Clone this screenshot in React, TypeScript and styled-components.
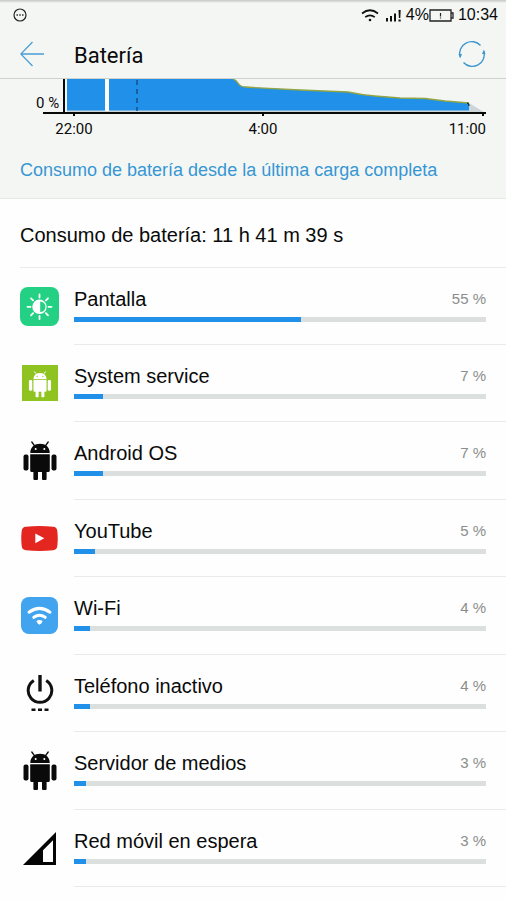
import React from "react";
import styled, { createGlobalStyle } from "styled-components";

const GlobalStyle = createGlobalStyle`
  *, *::before, *::after { box-sizing: border-box; }
  body {
    margin: 0;
    background: #fdfefd;
    color: #0a0a0a;
    font-family: "Liberation Sans", Arial, sans-serif;
  }
`;

const Page = styled.div`
  display: flex;
  flex-direction: column;
  min-height: 100vh;
  padding-bottom: 13px;
`;

const Top = styled.div`
  background: #f4f6f4;
  border-bottom: 1px solid #e6e8e6;
`;

const StatusBar = styled.div`
  display: flex;
  align-items: center;
  justify-content: space-between;
  height: 30px;
  padding: 0 8px 0 13px;
  background: linear-gradient(#c4c5c4, #f4f6f4 3px);
  font-size: 16px;
`;

const StatusGroup = styled.div`
  display: flex;
  align-items: center;
  gap: 4px;
`;

const Battery = styled.span`
  display: flex;
  align-items: center;
`;

const Header = styled.header`
  display: flex;
  align-items: center;
  height: 49px;
  padding: 0 20px;
  border-bottom: 1px solid #cfd1cf;
`;

const IconButton = styled.button`
  display: flex;
  padding: 0;
  border: 0;
  background: none;
  cursor: pointer;
`;

const Title = styled.h1`
  flex: 1;
  margin: 0 0 0 29px;
  padding-top: 3px;
  font: 400 22px/28px Roboto, sans-serif;
`;

const Chart = styled.section`
  display: grid;
  padding: 0 20px;
  font: 15px/20px Roboto, sans-serif;
`;

const Plot = styled.svg`
  grid-area: 1 / 1;
  display: block;
  width: 100%;
  height: 38px;
`;

const LevelLabel = styled.span`
  grid-area: 1 / 1;
  margin: 15px 0 0 16px;
  font-size: 15px;
  line-height: 18px;
`;

const Hours = styled.div`
  display: grid;
  grid-template-columns: 108fr 270fr 88fr;
  padding-top: 2px;
  text-align: center;

  span:last-child { text-align: right; }
`;

const ChargeLink = styled.a`
  display: block;
  padding: 20px 20px 17px;
  color: #3796d3;
  font-size: 18px;
  line-height: 22px;
  text-decoration: none;
`;

const Summary = styled.h2`
  margin: 0;
  padding: 24px 20px 20px;
  font-size: 20px;
  font-weight: 400;
  line-height: 24px;
`;

const List = styled.ul`
  flex: 1;
  display: grid;
  grid-auto-rows: 1fr;
  margin: 0;
  padding: 0 0 0 20px;
  list-style: none;
`;

const Item = styled.li`
  display: grid;
  grid-template-columns: 39px 1fr;
  column-gap: 15px;

  &:first-child { border-top: 1px solid #e9ebe9; }
`;

const IconBox = styled.div`
  display: flex;
  align-items: center;
  justify-content: center;
`;

const Details = styled.div`
  display: flex;
  flex-direction: column;
  gap: 6px;
  padding: 19px 20px 0 0;
  border-bottom: 1px solid #e9ebe9;
`;

const Line = styled.div`
  display: flex;
  justify-content: space-between;
  align-items: center;
  line-height: 24px;
`;

const Name = styled.span`
  font-size: 20px;
`;

const Share = styled.span`
  color: #8b8d8c;
  font-size: 15px;
`;

const Track = styled.div`
  height: 5px;
  background: #dbdfdd;
`;

const Fill = styled.div<{ $share: number }>`
  width: ${(p) => p.$share}%;
  height: 100%;
  background: #2090e8;
`;

const DisplayIcon = () => (
  <svg width="39" height="39" viewBox="0 0 39 39" aria-hidden="true">
    <rect width="39" height="39" rx="8" fill="#24d184" />
    <g stroke="#fff" strokeWidth="1.8" strokeLinecap="round">
      <path d="M19.5 7.5v3M19.5 29v3M7.5 19.8h3M28.5 19.8h3M11 11.3l2.1 2.1M25.9 26.2l2.1 2.1M11 28.3l2.1-2.1M25.9 13.4l2.1-2.1" />
    </g>
    <circle cx="19.5" cy="19.8" r="7.2" fill="#fff" />
    <path d="M20.2 14.5a5.3 5.3 0 0 1 0 10.6z" fill="#24d184" />
  </svg>
);

const Robot = ({ eye }: { eye: string }) => (
  <>
    <path d="M7.3 12C7.3 6 11.5 2.8 17 2.8S26.7 6 26.7 12z" />
    <path d="M11.6 4.8L8.8 1M22.4 4.8L25.2 1" stroke="currentColor" strokeWidth="1.3" strokeLinecap="round" />
    <path d="M7.2 13.2h19.6v16.3a1.500 1.500 0 0 1-1.500 1.500H23.6v7a1 1 0 0 1-1 1h-2.600a1 1 0 0 1-1-1v-7h-4v7a1 1 0 0 1-1 1h-2.600a1 1 0 0 1-1-1v-7H8.7a1.500 1.500 0 0 1-1.500-1.500z" />
    <rect x="0.5" y="13.5" width="5" height="16" rx="2" />
    <rect x="28.5" y="13.5" width="5" height="16" rx="2" />
    <circle cx="12.7" cy="8" r="1" fill={eye} />
    <circle cx="21.3" cy="8" r="1" fill={eye} />
  </>
);

const AndroidIcon = () => (
  <svg width="34" height="40" viewBox="0 0 34 40" fill="currentColor" aria-hidden="true">
    <Robot eye="#fff" />
  </svg>
);

const SystemIcon = () => (
  <svg width="36" height="36" viewBox="0 0 36 36" color="#fff" fill="currentColor" aria-hidden="true">
    <rect width="36" height="36" fill="#8fc31f" />
    <g transform="translate(6.6 6) scale(.67)">
      <Robot eye="#8fc31f" />
    </g>
  </svg>
);

const YouTubeIcon = () => (
  <svg width="37" height="25" viewBox="0 0 37 25" aria-hidden="true">
    <path d="M5 .8Q18.500-.6 32 .8 36 1 36.300 5 37.200 12.500 36.300 20 36 24 32 24.200 18.500 25.600 5 24.200 1 24 .7 20-.2 12.500.7 5 1 1 5 .8z" fill="#e32620" />
    <path d="M14.300 7.500v9.700l9-4.900z" fill="#fff" />
  </svg>
);

const WifiIcon = () => (
  <svg width="37" height="37" viewBox="0 0 37 37" aria-hidden="true">
    <rect width="37" height="37" rx="8" fill="#42a3ee" />
    <g fill="none" stroke="#fff" strokeWidth="3" strokeLinecap="round">
      <path d="M8 15.200Q18.500 7.500 29 15.200" />
      <path d="M12.800 20.300Q18.500 16.200 24.200 20.300" />
    </g>
    <path d="M15.300 24.200q3.200-2.400 6.400 0l-1.300 2.100-1.900 1.500-1.900-1.500z" fill="#fff" />
  </svg>
);

const IdleIcon = () => (
  <svg width="28" height="38" viewBox="0 0 28 38" fill="none" stroke="#111" aria-hidden="true">
    <path d="M14 1v16.500" strokeWidth="3.400" />
    <path d="M7.800 6.500A11.800 11.800 0 1 0 20.200 6.500" strokeWidth="3" />
    <path d="M5.500 35.800h4M12 35.800h4M18.500 35.800h4" strokeWidth="2.600" />
  </svg>
);

const CellIcon = () => (
  <svg width="33" height="33" viewBox="0 0 33 33" aria-hidden="true">
    <path fillRule="evenodd" d="M33 0v33H0zM30 8.300L20 18.300V30h10z" fill="#050505" />
  </svg>
);

const apps: { name: string; share: number; icon: React.ReactNode }[] = [
  { name: "Pantalla", share: 55, icon: <DisplayIcon /> },
  { name: "System service", share: 7, icon: <SystemIcon /> },
  { name: "Android OS", share: 7, icon: <AndroidIcon /> },
  { name: "YouTube", share: 5, icon: <YouTubeIcon /> },
  { name: "Wi-Fi", share: 4, icon: <WifiIcon /> },
  { name: "Teléfono inactivo", share: 4, icon: <IdleIcon /> },
  { name: "Servidor de medios", share: 3, icon: <AndroidIcon /> },
  { name: "Red móvil en espera", share: 3, icon: <CellIcon /> },
];

const levelCurve =
  "L213 0 Q216 1 218 4 Q220 8 226 8 L233 8.500 L280 11 L328 13 Q342 16 355 17 L380 19 L405 19.500 L425 22 L449 24";

export default function App() {
  return (
    <>
      <GlobalStyle />
      <Page>
        <Top>
          <StatusBar>
            <svg width="14" height="14" viewBox="0 0 14 14" aria-hidden="true">
              <circle cx="7" cy="7" r="6" fill="none" stroke="#222" strokeWidth="1.200" />
              <path d="M3.500 7h1.400M6.300 7h1.400M9.100 7h1.400" stroke="#222" strokeWidth="1.400" />
            </svg>
            <StatusGroup>
              <svg width="18" height="13" viewBox="0 0 18 13" fill="none" stroke="#111" aria-hidden="true">
                <path d="M1 4.500Q9-2 17 4.500M4.200 8.200Q9 4.500 13.800 8.200" strokeWidth="1.700" />
                <circle cx="9" cy="11" r="1.300" fill="#111" stroke="none" />
              </svg>
              <svg width="19" height="13" viewBox="0 0 19 13" aria-hidden="true">
                <path d="M3 9h2v3.500H3zM7 7h2v5.500H7zM11 4.500h2v8h-2zM15.500 1h2.200l-.4 8h-1.400zM15.500 10.500h2.200v2h-2.200z" fill="#111" />
              </svg>
              <Battery>
                4%
                <svg width="25" height="13" viewBox="0 0 25 13" aria-hidden="true">
                  <path d="M1 1h21v11H1zM22 4h2v5h-2" fill="none" stroke="#222" strokeWidth="1.300" />
                  <path d="M11.500 4v3.500M11.500 8.500v1" stroke="#222" strokeWidth="1.200" />
                </svg>
              </Battery>
              <span>10:34</span>
            </StatusGroup>
          </StatusBar>
          <Header>
            <IconButton type="button" aria-label="Atrás">
              <svg width="25" height="26" viewBox="0 0 25 26" fill="none" stroke="#4a9fd4" strokeWidth="1.300">
                <path d="M24 13H.8M12.500 1L.8 13l11.700 12" />
              </svg>
            </IconButton>
            <Title>Batería</Title>
            <IconButton type="button" aria-label="Actualizar">
              <svg width="28" height="28" viewBox="0 0 28 28" fill="none" stroke="#3b97cd" strokeWidth="1.400">
                <path d="M2 16.500A12 12 0 0 1 22.500 5.500M26 11.500A12 12 0 0 1 5.500 22.500" />
                <path d="M.5 14l1.700 4.500L4 14zM24 14l1.900-4.500L27.500 14z" fill="#3b97cd" stroke="none" />
              </svg>
            </IconButton>
          </Header>
          <Chart aria-label="Nivel de batería">
            <Plot viewBox="0 0 466 38" preserveAspectRatio="none" aria-hidden="true">
              <path d={`M47 0 ${levelCurve} L464 33 H47z`} fill="#ccd6da" />
              <path d={`M47 0 ${levelCurve} V31.500 H47z`} fill="#2090e8" />
              <path d={`M213 0 ${levelCurve}`} fill="none" stroke="#91a545" strokeWidth="1.300" />
              <path d="M85 0h4v32h-4z" fill="#fbfcfb" />
              <path d="M117 1V32" stroke="#174b86" strokeWidth="1.400" strokeDasharray="5 4" />
              <path d="M447 24q2 0 2 3" fill="none" stroke="#222" strokeWidth="1.200" />
              <path d="M43 0h2v33h-2zM23 33h443v2H23zM53 35h2v2h-2zM242 35h2v2h-2zM462 35h2v2h-2z" fill="#080808" />
            </Plot>
            <LevelLabel>0 %</LevelLabel>
            <Hours>
              <span>22:00</span>
              <span>4:00</span>
              <span>11:00</span>
            </Hours>
          </Chart>
          <ChargeLink href="#consumo">Consumo de batería desde la última carga completa</ChargeLink>
        </Top>
        <Summary id="consumo">Consumo de batería: 11 h 41 m 39 s</Summary>
        <List>
          {apps.map((app) => (
            <Item key={app.name}>
              <IconBox>{app.icon}</IconBox>
              <Details>
                <Line>
                  <Name>{app.name}</Name>
                  <Share>{app.share} %</Share>
                </Line>
                <Track role="progressbar" aria-label={app.name} aria-valuenow={app.share}>
                  <Fill $share={app.share} />
                </Track>
              </Details>
            </Item>
          ))}
        </List>
      </Page>
    </>
  );
}
